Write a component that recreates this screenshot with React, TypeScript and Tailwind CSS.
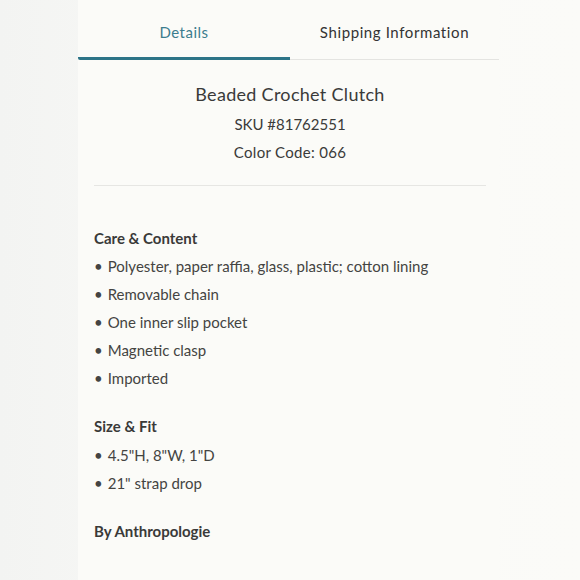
const careItems = [
  "Polyester, paper raffia, glass, plastic; cotton lining",
  "Removable chain",
  "One inner slip pocket",
  "Magnetic clasp",
  "Imported",
];

const sizeItems = ['4.5"H, 8"W, 1"D', '21" strap drop'];

function Bullet({ text }: { text: string }) {
  return (
    <li className="leading-[28px] text-[15px] text-[#444442]">
      <span className="mr-[5px]">•</span>
      {text}
    </li>
  );
}

export default function App() {
  return (
    <div
      className="flex w-[580px] h-[580px] overflow-hidden bg-gradient-to-r from-[#f3f4f2] via-[#fafaf8] to-[#fbfbf8]"
      style={{ fontFamily: "Lato, 'Noto Sans', sans-serif" }}
    >
      <div className="ml-[78px] w-[421px] flex flex-col bg-[#fbfbf8]">
        {/* tabs */}
        <div className="flex">
          <button className="w-[212px] h-[60px] pt-[8px] border-b-[3px] border-[#2c7487] rounded-bl-[2px] text-[15px] tracking-[0.5px] text-[#3b7d8e]">
            Details
          </button>
          <button className="flex-1 h-[60px] pt-[6px] border-b border-[#e4e4e1] text-[15px] tracking-[0.6px] text-[#333333]">
            Shipping Information
          </button>
        </div>

        <div className="px-[16px] pr-[13px]">
          <div className="mt-[20px] flex flex-col items-center text-[#3a3a39]">
            <h1 className="leading-[28px] text-[18px] tracking-[0.3px]">Beaded Crochet Clutch</h1>
            <p className="mt-[2px] leading-[28px] text-[15px]">SKU #81762551</p>
            <p className="leading-[28px] text-[15px] tracking-[0.3px]">Color Code: 066</p>
          </div>

          <div className="mt-[19px] h-px bg-[#e6e6e3]" />

          <h2 className="mt-[38px] leading-[28px] text-[15px] font-bold text-[#3a3a39]">Care &amp; Content</h2>
          <ul>
            {careItems.map((t) => (
              <Bullet key={t} text={t} />
            ))}
          </ul>

          <h2 className="mt-[20px] leading-[28px] text-[15px] font-bold text-[#3a3a39]">Size &amp; Fit</h2>
          <ul className="mt-[1px]">
            {sizeItems.map((t) => (
              <Bullet key={t} text={t} />
            ))}
          </ul>

          <h2 className="mt-[20px] leading-[28px] text-[15px] font-bold text-[#3a3a39]">By Anthropologie</h2>
        </div>
      </div>
    </div>
  );
}
